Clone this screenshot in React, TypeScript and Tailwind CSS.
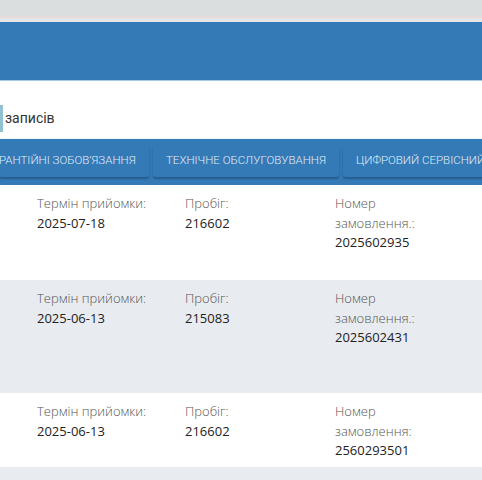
import React from 'react';

type Row = { date: string; mileage: string; order: string; orderLabel: string; h: string; bg: string };

const rows: Row[] = [
  { date: '2025-07-18', mileage: '216602', order: '2025602935', orderLabel: 'замовлення.:', h: 'h-[95px]', bg: 'bg-white' },
  { date: '2025-06-13', mileage: '215083', order: '2025602431', orderLabel: 'замовлення.:', h: 'h-[113px]', bg: 'bg-[#e8ebf0]' },
  { date: '2025-06-13', mileage: '216602', order: '2560293501', orderLabel: 'замовлення:', h: 'h-[74px]', bg: 'bg-white' },
];

const tabs = [
  { label: 'РАНТІЙНІ ЗОБОВ’ЯЗАННЯ', cls: 'w-[150px] pl-0 -ml-[1px]' },
  { label: 'ТЕХНІЧНЕ ОБСЛУГОВУВАННЯ', cls: 'w-[186px] pl-[13px]' },
  { label: 'ЦИФРОВИЙ СЕРВІСНИЙ ЖУРНАЛ', cls: 'w-[200px] pl-[13px]' },
];

export default function App() {
  return (
    <div className="w-[482px] h-[480px] overflow-hidden bg-white" style={{ fontFamily: '"Open Sans", sans-serif' }}>
      <div className="h-[16px] bg-[#dbdedf]" />
      <div className="h-[2px] bg-[#e6dcdc]" />
      <div className="h-[4px] bg-[#e3e5e7]" />
      <div className="h-[58px] bg-[#337ab7]" />
      <div className="h-[1px] bg-[#a4c8e6]" />

      <div className="h-[58px] bg-white flex flex-col">
        <div className="h-[24px]" />
        <div className="flex items-center h-[27px]">
          <div className="w-[3px] h-[27px] bg-[#92c2d2]" />
          <span className="ml-[2px] text-[14px] text-[#333]" style={{ fontFamily: 'Roboto, sans-serif' }}>записів</span>
        </div>
        <div className="flex-1" />
        <div className="h-[1px] bg-[#eef5fa]" />
      </div>

      <div className="h-[46px] bg-[#337ab7] flex items-start pt-[6px] gap-[4px] overflow-hidden">
        {tabs.map((t, i) => (
          <div
            key={i}
            className={`shrink-0 h-[32px] flex items-center rounded-[3px] bg-[#337ab7] shadow-[0_2px_2px_rgba(0,0,0,0.25)] text-[11.5px] font-light text-[#e2ecf5] whitespace-nowrap ${t.cls}`}
            style={{ fontFamily: 'Roboto, sans-serif' }}
          >
            {t.label}
          </div>
        ))}
      </div>

      {rows.map((r, i) => (
        <div key={i} className={`${r.h} ${r.bg} flex pt-[9px] text-[13px] leading-[19.5px]`}>
          <div className="w-[37px] shrink-0" />
          <div className="w-[148px] shrink-0">
            <div className="text-[#555] font-light">Термін прийомки:</div>
            <div className="text-[#222]">{r.date}</div>
          </div>
          <div className="w-[150px] shrink-0">
            <div className="text-[#555] font-light">Пробіг:</div>
            <div className="text-[#222]">{r.mileage}</div>
          </div>
          <div className="flex-1">
            <div className="text-[#555] font-light">Номер</div>
            <div className="text-[#555] font-light">{r.orderLabel}</div>
            <div className="text-[#222]">{r.order}</div>
          </div>
        </div>
      ))}
      <div className="h-[20px] bg-[#e8ebf0]" />
    </div>
  );
}
